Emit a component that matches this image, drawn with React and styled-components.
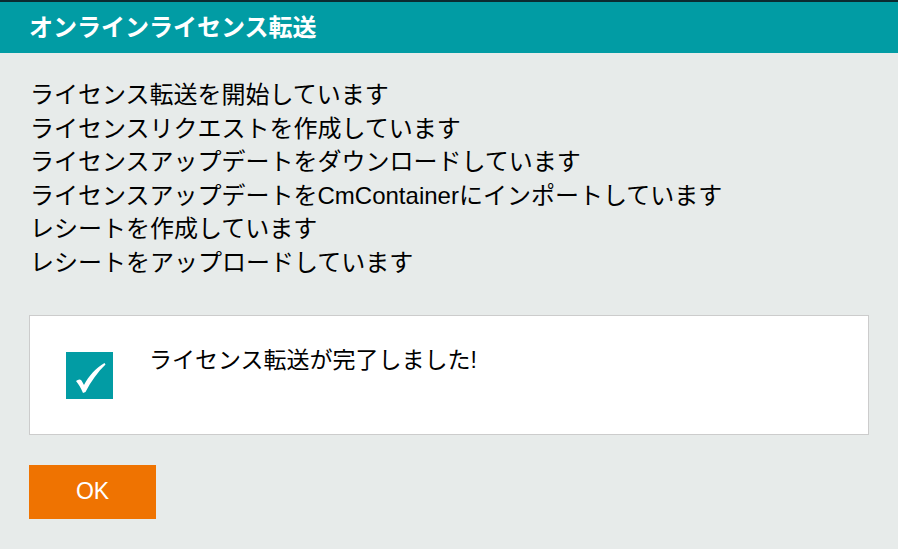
import React from 'react';
import styled, { createGlobalStyle } from 'styled-components';

const GlobalStyle = createGlobalStyle`
    html, body {
        margin: 0;
        padding: 0;
        background: #e7ebea;
    }
    body {
        font-family: "Liberation Sans", "Noto Sans CJK JP", sans-serif;
        color: #000;
    }
`;

const steps = [
    'ライセンス転送を開始しています',
    'ライセンスリクエストを作成しています',
    'ライセンスアップデートをダウンロードしています',
    'ライセンスアップデートをCmContainerにインポートしています',
    'レシートを作成しています',
    'レシートをアップロードしています',
];

function CheckIcon() {
    return (
        <svg width="47" height="47" viewBox="0 0 47 47">
            <rect width="47" height="47" fill="#029ca4" />
            <path
                d="M10 29 C12 27.5 14 27 15.5 28.5 L18 33 C22.5 24 30 16 38.5 11 L39.5 12.5 C31.5 20 25 29.5 19.5 40 L17 41 C15 36 12.5 32 10 29 Z"
                fill="#fff"
            />
        </svg>
    );
}

function App() {
    return (
        <>
            <GlobalStyle />
            <Dialog>
                <Header>
                    <Title>オンラインライセンス転送</Title>
                </Header>
                <Body>
                    <StepList>
                        {steps.map((s) => (
                            <Step key={s}>{s}</Step>
                        ))}
                    </StepList>
                    <ResultPanel>
                        <CheckIcon />
                        <ResultText>ライセンス転送が完了しました!</ResultText>
                    </ResultPanel>
                    <OkButton>OK</OkButton>
                </Body>
            </Dialog>
        </>
    );
}

const Dialog = styled.div`
    width: 898px;
    height: 549px;
    background: #e7ebea;
    overflow: hidden;
`;

const Header = styled.header`
    height: 51px;
    border-top: 2px solid #0b2b30;
    background: #019ca4;
    display: flex;
    align-items: center;
    padding-left: 29px;
`;

const Title = styled.h1`
    margin: 0;
    color: #fff;
    font-size: 24px;
    font-weight: bold;
    line-height: 1;
`;

const Body = styled.div`
    padding: 25px 29px 0 30px;
`;

const StepList = styled.ul`
    list-style: none;
    margin: 0;
    padding: 0;
`;

const Step = styled.li`
    font-size: 24px;
    line-height: 33.6px;
    height: 33.6px;
    white-space: nowrap;
`;

const ResultPanel = styled.div`
    box-sizing: border-box;
    margin: 35px 0 0 -1px;
    height: 120px;
    background: #fff;
    border: 1px solid #cccccc;
    display: flex;
    align-items: flex-start;
    gap: 36px;
    padding: 36px 36px 0 36px;

    svg {
        flex-shrink: 0;
    }
`;

const ResultText = styled.div`
    font-size: 23px;
    line-height: 32px;
    margin-top: -8px;
`;

const OkButton = styled.button`
    margin: 30px 0 0 -1px;
    width: 127px;
    height: 54px;
    border: none;
    background: #ef7301;
    color: #fff;
    font-family: "Liberation Sans", sans-serif;
    font-size: 23px;
    cursor: pointer;
`;

export default App;
